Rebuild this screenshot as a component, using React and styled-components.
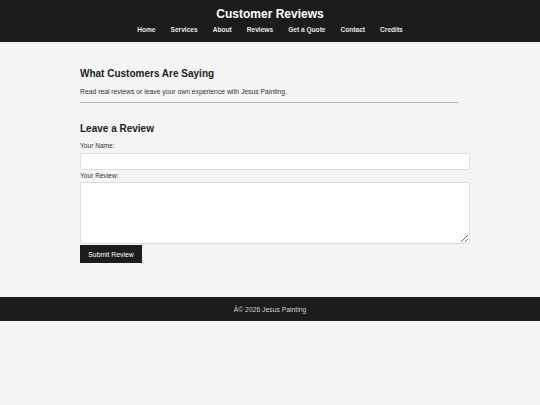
import styled, { createGlobalStyle } from "styled-components";

const Global = createGlobalStyle`
  html, body {
    margin: 0;
    padding: 0;
    background: #f4f4f4;
    font-family: "Liberation Sans", Arial, sans-serif;
    color: #222;
  }
`;

const Header = styled.header`
  background: #1c1c1c;
  color: white;
  height: 42px;
  box-sizing: border-box;
  padding-top: 7px;
  text-align: center;
`;

const Title = styled.h1`
  margin: 0;
  font-size: 12px;
  line-height: 14px;
  font-weight: bold;
`;

const Nav = styled.nav`
  display: flex;
  justify-content: center;
  gap: 15px;
  margin-top: 4px;
`;

const NavLink = styled.a`
  color: #e6e6e6;
  font-size: 6.6px;
  font-weight: bold;
  line-height: 10px;
  text-decoration: none;
  cursor: pointer;
`;

const Main = styled.main`
  width: 390px;
  margin: 0 auto;
  padding: 25px 0 34px 10px;
`;

const Intro = styled.section`
  width: 379px;
  border-bottom: 1px solid #bbb;
  padding-bottom: 6px;
`;

const Heading = styled.h2`
  margin: 0;
  font-size: 10px;
  line-height: 14px;
  font-weight: bold;
  color: #222;
`;

const Text = styled.p`
  margin: 6px 0 0;
  font-size: 6.8px;
  line-height: 9px;
  color: #333;
`;

const Form = styled.form`
  display: flex;
  flex-direction: column;
  margin-top: 19px;
`;

const Label = styled.label`
  font-size: 6.6px;
  line-height: 9px;
  color: #333;
  margin-top: ${(p) => p.$top || 0}px;
`;

const Input = styled.input`
  box-sizing: border-box;
  width: 100%;
  height: 17px;
  margin-top: 3px;
  border: 1px solid #ddd;
  border-radius: 2px;
  background: white;
`;

const TextArea = styled.textarea`
  box-sizing: border-box;
  width: 100%;
  height: 62px;
  margin-top: 2px;
  border: 1px solid #ddd;
  border-radius: 2px;
  background: white;
  resize: vertical;
`;

const Button = styled.button`
  align-self: flex-start;
  margin-top: 1px;
  width: 62px;
  height: 18px;
  padding: 0;
  border: none;
  background: #1c1c1c;
  color: white;
  font-family: "Liberation Sans", Arial, sans-serif;
  font-size: 6.8px;
  cursor: pointer;
`;

const Footer = styled.footer`
  background: #1c1c1c;
  color: #cfcfcf;
  height: 24px;
  display: flex;
  align-items: center;
  justify-content: center;
  font-size: 6.8px;
`;

const links = ["Home", "Services", "About", "Reviews", "Get a Quote", "Contact", "Credits"];

const App = () => {
  return (
    <>
      <Global />
      <Header>
        <Title>Customer Reviews</Title>
        <Nav>
          {links.map((l) => (
            <NavLink key={l}>{l}</NavLink>
          ))}
        </Nav>
      </Header>
      <Main>
        <Intro>
          <Heading>What Customers Are Saying</Heading>
          <Text>Read real reviews or leave your own experience with Jesus Painting.</Text>
        </Intro>
        <Form onSubmit={(e) => e.preventDefault()}>
          <Heading>Leave a Review</Heading>
          <Label $top={5}>Your Name:</Label>
          <Input type="text" />
          <Label $top={1}>Your Review:</Label>
          <TextArea />
          <Button type="submit">Submit Review</Button>
        </Form>
      </Main>
      <Footer>Â© 2026 Jesus Painting</Footer>
    </>
  );
};

export default App;
